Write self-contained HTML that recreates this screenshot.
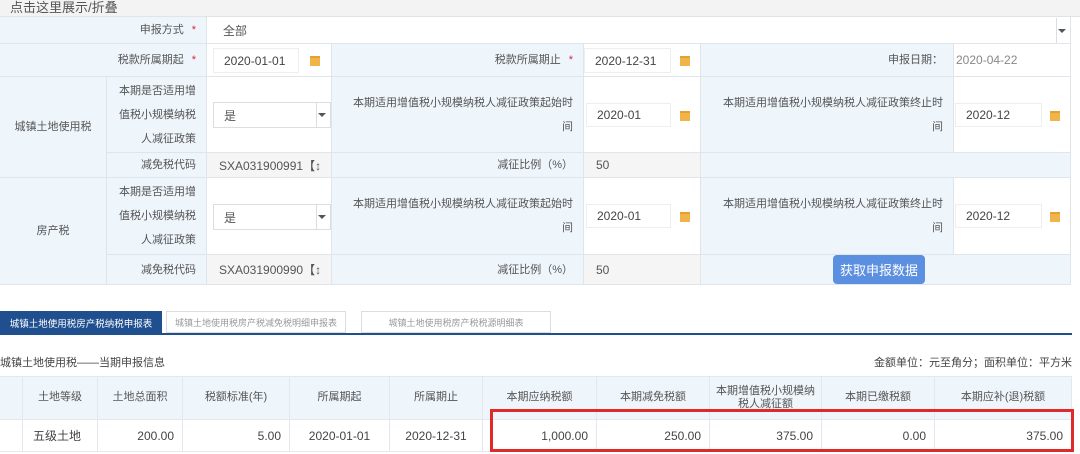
<!DOCTYPE html>
<html><head><meta charset="utf-8"><style>
*{margin:0;padding:0;box-sizing:border-box}
body{width:1080px;height:454px;overflow:hidden;background:#fff;font-family:"Liberation Sans","Noto Sans CJK SC",sans-serif;font-size:11px;color:#555;position:relative}
.a{position:absolute}
.c{position:absolute;border-right:1px solid #dfe5ea;border-bottom:1px solid #dfe5ea;display:flex;align-items:center}
.l{background:#eef5fb;justify-content:flex-end;padding-right:10px;text-align:right;line-height:24px}
.w{background:#fff}
.g{background:#f5f5f5;padding-left:12px;font-size:12px;color:#555}
.inp{position:absolute;background:#fff;border:1px solid #eee;font-size:12px;color:#444;padding-left:10px;display:flex;align-items:center}
.cal{position:absolute;width:10px;height:10px;background:#f0b44a;border-top:2px solid #e6a030}
.st{color:#d9263c;margin-left:8px}
.sel{position:absolute;background:#fff;border:1px solid #ddd;font-size:12px;padding-left:10px;display:flex;align-items:center}
.arr{position:absolute;right:4px;top:50%;margin-top:-2px;border-left:4px solid transparent;border-right:4px solid transparent;border-top:4px solid #555}
.h{position:absolute;display:flex;align-items:center;justify-content:center;border-right:1px solid #e3e8ee;border-bottom:1px solid #e3e8ee;font-size:11px;text-align:center;line-height:13px}
.d{position:absolute;display:flex;align-items:center;justify-content:flex-end;padding-right:8px;border-right:1px solid #e3e8ee;border-bottom:1px solid #e3e8ee;font-size:12px;color:#444}
</style></head><body>
<div class="a" style="left:0;top:0;width:1080px;height:17px;background:#f3f3f3;border-bottom:1px solid #dde5e8"></div>
<div class="a" style="left:10px;top:0;font-size:13px;color:#555;line-height:15px">点击这里展示/折叠</div>
<div class="a" style="left:0;top:17px;width:1071px;height:268px;border-left:1px solid #dfe5ea;border-top:1px solid #dfe5ea"></div>
<!-- row1 -->
<div class="c l" style="left:0;top:17px;width:207px;height:27px">申报方式<span class="st">*</span></div>
<div class="c w" style="left:207px;top:17px;width:864px;height:27px"></div>
<div class="sel" style="left:213px;top:18px;width:857px;height:25px;border:none">全部<div class="a" style="right:0;top:0;width:14px;height:25px;border-left:1px solid #ddd"><div class="arr"></div></div></div>
<!-- row2 -->
<div class="c l" style="left:0;top:44px;width:207px;height:33px">税款所属期起<span class="st">*</span></div>
<div class="c w" style="left:207px;top:44px;width:125px;height:33px"></div>
<div class="inp" style="left:213px;top:48px;width:86px;height:25px">2020-01-01</div><div class="cal" style="left:310px;top:56px"></div>
<div class="c l" style="left:332px;top:44px;width:252px;height:33px">税款所属期止<span class="st">*</span></div>
<div class="c w" style="left:584px;top:44px;width:117px;height:33px"></div>
<div class="inp" style="left:584px;top:48px;width:87px;height:25px">2020-12-31</div><div class="cal" style="left:680px;top:56px"></div>
<div class="c l" style="left:701px;top:44px;width:253px;height:33px">申报日期：</div>
<div class="c w" style="left:954px;top:44px;width:117px;height:33px;padding-left:2px;font-size:12px;color:#888">2020-04-22</div>
<!-- block1 -->
<div class="c l" style="left:0;top:77px;width:107px;height:101px;justify-content:center;padding:0">城镇土地使用税</div>
<div class="c l" style="left:107px;top:77px;width:100px;height:76px">本期是否适用增<br>值税小规模纳税<br>人减征政策</div>
<div class="c w" style="left:207px;top:77px;width:125px;height:76px"></div>
<div class="sel" style="left:213px;top:102px;width:118px;height:26px">是<div class="a" style="right:0;top:0;width:14px;height:24px;border-left:1px solid #ddd"><div class="arr"></div></div></div>
<div class="c l" style="left:332px;top:77px;width:252px;height:76px">本期适用增值税小规模纳税人减征政策起始时<br>间</div>
<div class="c w" style="left:584px;top:77px;width:117px;height:76px"></div>
<div class="inp" style="left:586px;top:103px;width:85px;height:24px">2020-01</div><div class="cal" style="left:680px;top:111px"></div>
<div class="c l" style="left:701px;top:77px;width:253px;height:76px">本期适用增值税小规模纳税人减征政策终止时<br>间</div>
<div class="c w" style="left:954px;top:77px;width:117px;height:76px"></div>
<div class="inp" style="left:955px;top:103px;width:87px;height:24px">2020-12</div><div class="cal" style="left:1050px;top:111px"></div>
<div class="c l" style="left:107px;top:153px;width:100px;height:25px">减免税代码</div>
<div class="c g" style="left:207px;top:153px;width:125px;height:25px">SXA031900991【↕</div>
<div class="c l" style="left:332px;top:153px;width:252px;height:25px">减征比例（%）</div>
<div class="c g" style="left:584px;top:153px;width:117px;height:25px">50</div>
<div class="c l" style="left:701px;top:153px;width:370px;height:25px"></div>
<!-- block2 -->
<div class="c l" style="left:0;top:178px;width:107px;height:107px;justify-content:center;padding:0">房产税</div>
<div class="c l" style="left:107px;top:178px;width:100px;height:77px">本期是否适用增<br>值税小规模纳税<br>人减征政策</div>
<div class="c w" style="left:207px;top:178px;width:125px;height:77px"></div>
<div class="sel" style="left:213px;top:204px;width:118px;height:26px">是<div class="a" style="right:0;top:0;width:14px;height:24px;border-left:1px solid #ddd"><div class="arr"></div></div></div>
<div class="c l" style="left:332px;top:178px;width:252px;height:77px">本期适用增值税小规模纳税人减征政策起始时<br>间</div>
<div class="c w" style="left:584px;top:178px;width:117px;height:77px"></div>
<div class="inp" style="left:586px;top:204px;width:85px;height:24px">2020-01</div><div class="cal" style="left:680px;top:212px"></div>
<div class="c l" style="left:701px;top:178px;width:253px;height:77px">本期适用增值税小规模纳税人减征政策终止时<br>间</div>
<div class="c w" style="left:954px;top:178px;width:117px;height:77px"></div>
<div class="inp" style="left:955px;top:204px;width:87px;height:24px">2020-12</div><div class="cal" style="left:1050px;top:212px"></div>
<div class="c l" style="left:107px;top:255px;width:100px;height:30px">减免税代码</div>
<div class="c g" style="left:207px;top:255px;width:125px;height:30px">SXA031900990【↕</div>
<div class="c l" style="left:332px;top:255px;width:252px;height:30px">减征比例（%）</div>
<div class="c g" style="left:584px;top:255px;width:117px;height:30px">50</div>
<div class="c l" style="left:701px;top:255px;width:370px;height:30px"></div>
<div class="a" style="left:833px;top:255px;width:92px;height:29px;background:#5b8fe0;border-radius:4px;color:#fff;font-size:13px;display:flex;align-items:center;justify-content:center">获取申报数据</div>
<!-- tabs -->
<div class="a" style="left:0;top:311px;width:162px;height:23px;background:#1f4f8f;color:#fff;font-size:9.5px;display:flex;align-items:center;justify-content:center">城镇土地使用税房产税纳税申报表</div>
<div class="a" style="left:166px;top:311px;width:180px;height:22px;border:1px solid #ddd;color:#999;font-size:9px;display:flex;align-items:center;justify-content:center">城镇土地使用税房产税减免税明细申报表</div>
<div class="a" style="left:361px;top:311px;width:190px;height:22px;border:1px solid #ddd;color:#999;font-size:9px;display:flex;align-items:center;justify-content:center">城镇土地使用税房产税税源明细表</div>
<div class="a" style="left:0;top:333px;width:1072px;height:2px;background:#1f4f8f"></div>
<div class="a" style="left:0;top:354px;font-size:11px;color:#444">城镇土地使用税——当期申报信息</div>
<div class="a" style="right:8px;top:354px;font-size:11px;color:#444">金额单位：元至角分；面积单位：平方米</div>
<!-- table -->
<div class="a" style="left:0;top:376px;width:1072px;height:44px;background:#eef5fb;border-top:1px solid #e3e8ee"></div>
<div class="h" style="left:0;top:376px;width:23px;height:44px"></div>
<div class="h" style="left:23px;top:376px;width:75px;height:44px">土地等级</div>
<div class="h" style="left:98px;top:376px;width:85px;height:44px">土地总面积</div>
<div class="h" style="left:183px;top:376px;width:107px;height:44px">税额标准(年)</div>
<div class="h" style="left:290px;top:376px;width:100px;height:44px">所属期起</div>
<div class="h" style="left:390px;top:376px;width:93px;height:44px">所属期止</div>
<div class="h" style="left:483px;top:376px;width:114px;height:44px">本期应纳税额</div>
<div class="h" style="left:597px;top:376px;width:113px;height:44px">本期减免税额</div>
<div class="h" style="left:710px;top:376px;width:112px;height:44px">本期增值税小规模纳<br>税人减征额</div>
<div class="h" style="left:822px;top:376px;width:113px;height:44px">本期已缴税额</div>
<div class="h" style="left:935px;top:376px;width:137px;height:44px">本期应补(退)税额</div>
<div class="d" style="left:0;top:420px;width:23px;height:32px"></div>
<div class="d" style="left:23px;top:420px;width:75px;height:32px;justify-content:flex-start;padding-left:10px">五级土地</div>
<div class="d" style="left:98px;top:420px;width:85px;height:32px">200.00</div>
<div class="d" style="left:183px;top:420px;width:107px;height:32px">5.00</div>
<div class="d" style="left:290px;top:420px;width:100px;height:32px;justify-content:center;padding:0">2020-01-01</div>
<div class="d" style="left:390px;top:420px;width:93px;height:32px;justify-content:center;padding:0">2020-12-31</div>
<div class="d" style="left:483px;top:420px;width:114px;height:32px">1,000.00</div>
<div class="d" style="left:597px;top:420px;width:113px;height:32px">250.00</div>
<div class="d" style="left:710px;top:420px;width:112px;height:32px">375.00</div>
<div class="d" style="left:822px;top:420px;width:113px;height:32px">0.00</div>
<div class="d" style="left:935px;top:420px;width:137px;height:32px">375.00</div>
<div class="a" style="left:490px;top:409px;width:584px;height:43px;border:3px solid #e02a2a"></div>
</body></html>
